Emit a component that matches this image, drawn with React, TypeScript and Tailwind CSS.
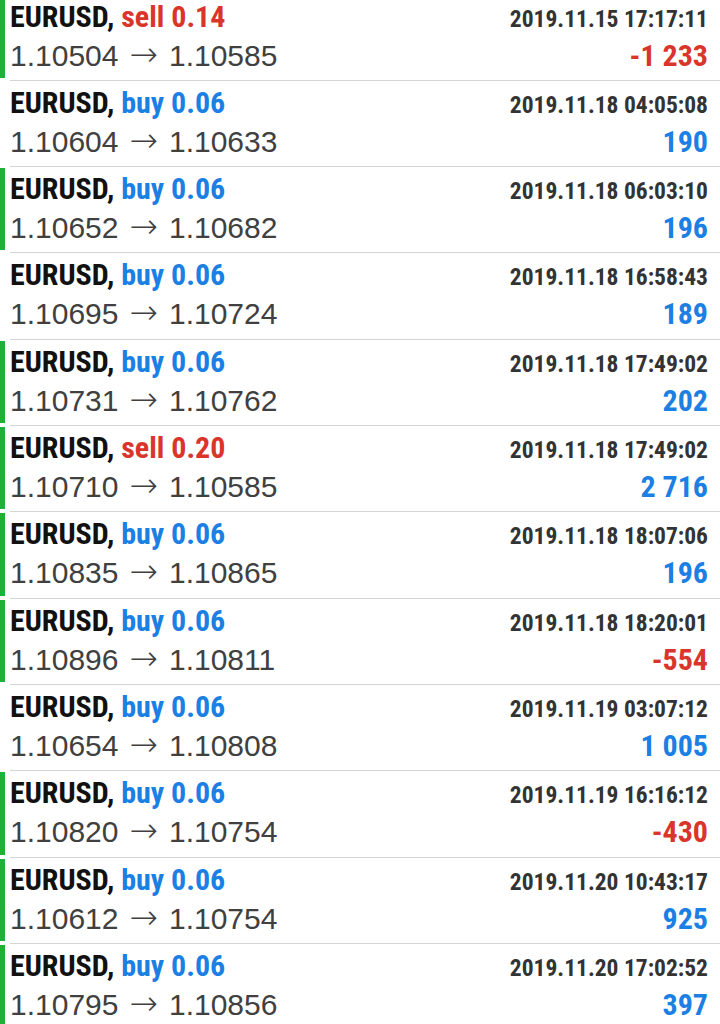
import React from 'react'

type Trade = {
  side: 'buy' | 'sell'
  lots: string
  open: string
  close: string
  time: string
  profit: string
  marked: boolean
}

const trades: Trade[] = [
  { side: 'sell', lots: '0.14', open: '1.10504', close: '1.10585', time: '2019.11.15 17:17:11', profit: '-1 233', marked: true },
  { side: 'buy', lots: '0.06', open: '1.10604', close: '1.10633', time: '2019.11.18 04:05:08', profit: '190', marked: false },
  { side: 'buy', lots: '0.06', open: '1.10652', close: '1.10682', time: '2019.11.18 06:03:10', profit: '196', marked: true },
  { side: 'buy', lots: '0.06', open: '1.10695', close: '1.10724', time: '2019.11.18 16:58:43', profit: '189', marked: false },
  { side: 'buy', lots: '0.06', open: '1.10731', close: '1.10762', time: '2019.11.18 17:49:02', profit: '202', marked: true },
  { side: 'sell', lots: '0.20', open: '1.10710', close: '1.10585', time: '2019.11.18 17:49:02', profit: '2 716', marked: true },
  { side: 'buy', lots: '0.06', open: '1.10835', close: '1.10865', time: '2019.11.18 18:07:06', profit: '196', marked: true },
  { side: 'buy', lots: '0.06', open: '1.10896', close: '1.10811', time: '2019.11.18 18:20:01', profit: '-554', marked: true },
  { side: 'buy', lots: '0.06', open: '1.10654', close: '1.10808', time: '2019.11.19 03:07:12', profit: '1 005', marked: false },
  { side: 'buy', lots: '0.06', open: '1.10820', close: '1.10754', time: '2019.11.19 16:16:12', profit: '-430', marked: true },
  { side: 'buy', lots: '0.06', open: '1.10612', close: '1.10754', time: '2019.11.20 10:43:17', profit: '925', marked: true },
  { side: 'buy', lots: '0.06', open: '1.10795', close: '1.10856', time: '2019.11.20 17:02:52', profit: '397', marked: true },
]

const narrow = "font-['Liberation_Sans_Narrow','Roboto_Condensed','Roboto',sans-serif] font-bold"

function TradeRow({ trade }: { trade: Trade }) {
  const sideColor = trade.side === 'sell' ? 'text-[#d9352b]' : 'text-[#1b7fe3]'
  const profitColor = trade.profit.startsWith('-') ? 'text-[#d9352b]' : 'text-[#1b7fe3]'

  return (
    <div className="flex h-[86.33px]">
      {/* status marker */}
      <div className="w-[10px] shrink-0 pt-[1px] pb-[3px]">
        {trade.marked && <div className="h-full w-[5px] bg-[#1eb038]" />}
      </div>

      <div className="flex flex-1 flex-col border-b border-[#d4d4d4] pt-[7px] pr-[12px]">
        <div className="flex items-baseline justify-between">
          <span className={`${narrow} text-[30px] leading-none text-[#111]`}>
            EURUSD, <span className={sideColor}>{trade.side} {trade.lots}</span>
          </span>
          <span className={`${narrow} text-[23.5px] leading-none text-[#333]`}>{trade.time}</span>
        </div>
        <div className="mt-[9px] flex items-baseline justify-between">
          <span className="font-['Liberation_Sans',Arial,sans-serif] text-[30px] leading-none text-[#404040]">
            {trade.open}
            <span className="mx-[11px] font-['DejaVu_Sans',sans-serif] text-[34px] leading-[0px] font-extralight">→</span>
            {trade.close}
          </span>
          <span className={`${narrow} text-[30px] leading-none ${profitColor}`}>{trade.profit}</span>
        </div>
      </div>
    </div>
  )
}

export default function App() {
  return (
    <div className="h-[1024px] w-[720px] overflow-hidden bg-white">
      <div className="-mt-[5.5px]">
        {trades.map((t, i) => (
          <TradeRow key={i} trade={t} />
        ))}
      </div>
    </div>
  )
}
